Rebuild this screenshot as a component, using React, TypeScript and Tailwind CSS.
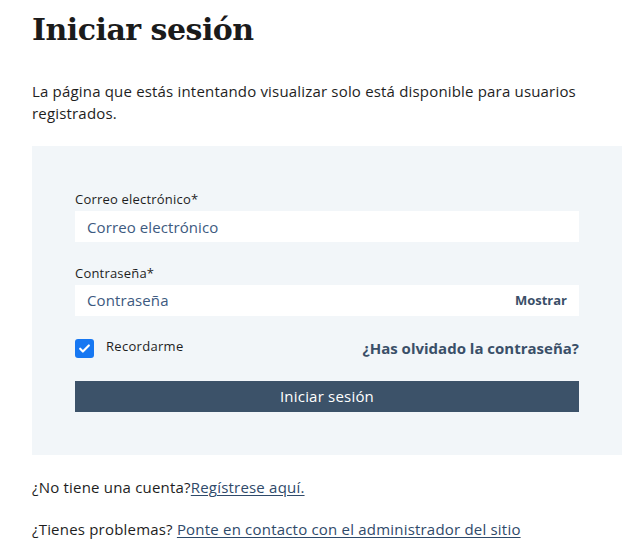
export default function App() {
  return (
    <div className="min-h-screen bg-white px-[32px] pt-[10px] text-[#1e1e1e] font-['Open_Sans',sans-serif]">
      {/* Header */}
      <h1 className="font-['DejaVu_Serif',serif] font-bold text-[30px] leading-[40px] tracking-[-0.5px] text-[#1b1b1b]">
        Iniciar sesión
      </h1>

      <p className="mt-[30px] w-[570px] text-[15px] leading-[22px] tracking-[0.18px]">
        La página que estás intentando visualizar solo está disponible para usuarios
        registrados.
      </p>

      {/* Form panel */}
      <div className="mt-[22px] w-[590px] bg-[#f2f6f9] px-[43px] pt-[44px] pb-[43px]">
        <div className="flex flex-col">
          <label className="text-[13px] leading-[18px] tracking-[0.2px]">Correo electrónico*</label>
          <input
            type="text"
            placeholder="Correo electrónico"
            className="mt-[3px] h-[31px] bg-white px-[12px] text-[15px] tracking-[0.1px] placeholder:text-[#3d5a80] focus:outline-none"
          />
        </div>

        <div className="mt-[22px] flex flex-col">
          <label className="text-[13px] leading-[18px] tracking-[0.2px]">Contraseña*</label>
          <div className="mt-[3px] flex h-[31px] items-center justify-between bg-white px-[12px]">
            <input
              type="password"
              placeholder="Contraseña"
              className="flex-1 bg-transparent text-[15px] tracking-[0.1px] placeholder:text-[#3d5a80] focus:outline-none"
            />
            <span className="text-[13px] font-bold text-[#3a4f68]">Mostrar</span>
          </div>
        </div>

        <div className="mt-[23px] flex h-[19px] items-start justify-between">
          <div className="flex items-start gap-x-[12px]">
            <div className="flex size-[19px] items-center justify-center rounded-[3px] bg-[#1677f2]">
              <svg width="13" height="13" viewBox="0 0 24 24" fill="none">
                <path
                  d="M4 12.5l5 5L20 6.5"
                  stroke="white"
                  strokeWidth="4"
                  strokeLinecap="round"
                  strokeLinejoin="round"
                />
              </svg>
            </div>
            <span className="text-[13px] leading-[15px] tracking-[0.3px]">Recordarme</span>
          </div>
          <a className="text-[15px] font-bold leading-[19px] text-[#3a4f68]">
            ¿Has olvidado la contraseña?
          </a>
        </div>

        <button className="mt-[23px] h-[31px] w-full bg-[#3c5269] text-[15px] tracking-[0.2px] text-white">
          Iniciar sesión
        </button>
      </div>

      {/* Footer links */}
      <p className="mt-[21px] text-[15px] leading-[22px] tracking-[0.2px]">
        ¿No tiene una cuenta?
        <a className="text-[#2f4a6a] underline underline-offset-2">Regístrese aquí.</a>
      </p>
      <p className="mt-[20px] text-[15px] leading-[22px] tracking-[0.2px]">
        ¿Tienes problemas?{" "}
        <a className="text-[#2f4a6a] underline underline-offset-2">
          Ponte en contacto con el administrador del sitio
        </a>
      </p>
    </div>
  );
}
